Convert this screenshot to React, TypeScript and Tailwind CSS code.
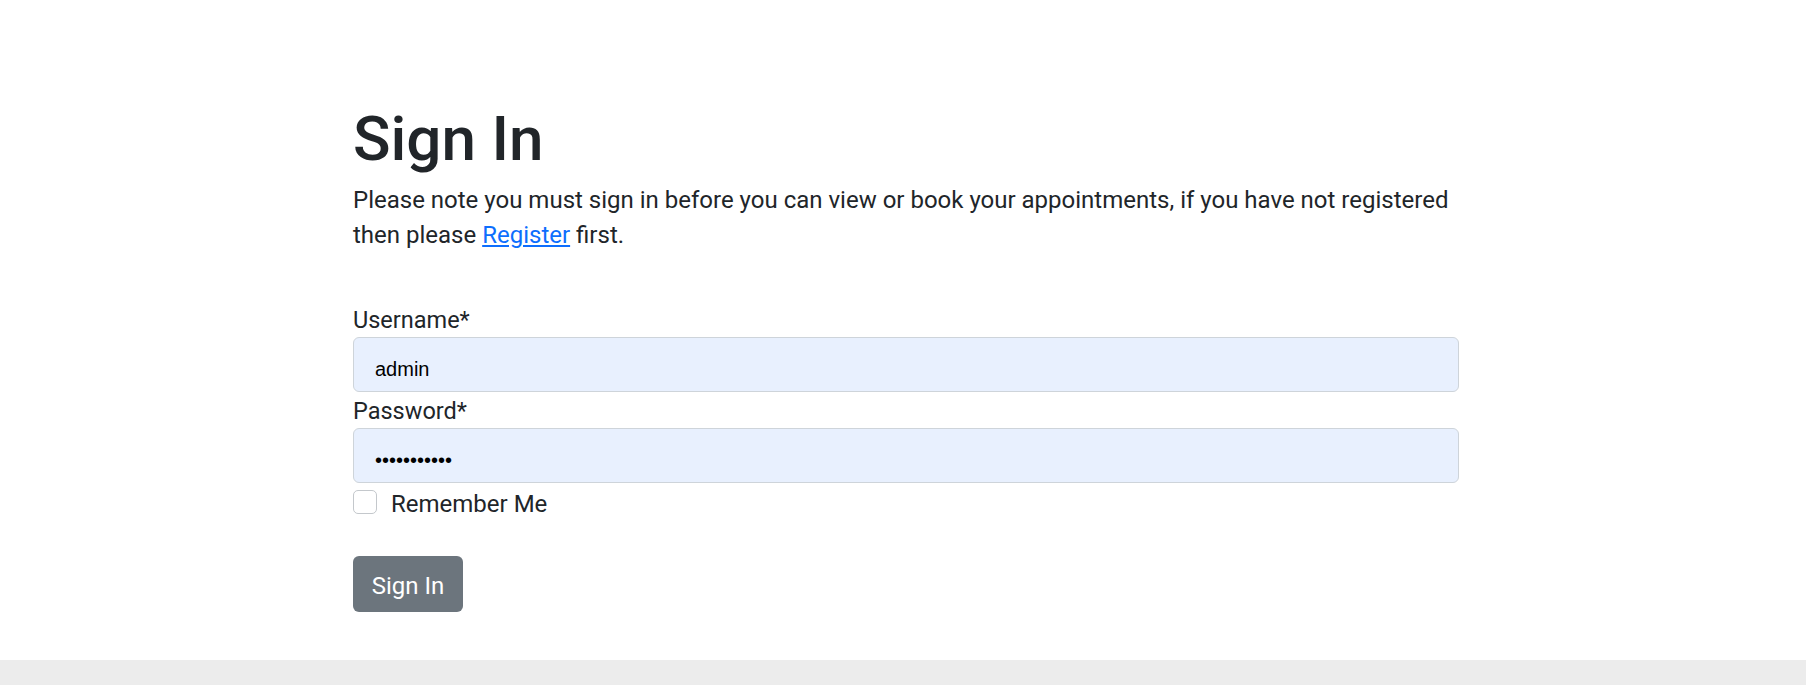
import React from "react";

export default function App() {
  const font = { fontFamily: "Roboto, 'Noto Sans', sans-serif" };
  const mono = { fontFamily: "'Liberation Sans', Arial, sans-serif" };
  return (
    <div className="h-[685px] flex flex-col bg-white text-[#212529]" style={font}>
      <main className="flex-1 pt-[103px]">
        <div className="ml-[353px] w-[1106px]">
          <h1 className="text-[62px] leading-[72px] font-medium">Sign In</h1>
          <p className="mt-[8px] text-[24px] leading-[35px]">
            Please note you must sign in before you can view or book your appointments, if you have not registered then please{" "}
            <a href="#" className="text-[#0d6efd] underline">Register</a> first.
          </p>
          <form className="mt-[52px]" onSubmit={(e) => e.preventDefault()}>
            <label className="block text-[23.5px] leading-[31px]">Username*</label>
            <div className="mt-[1px] h-[55px] rounded-[6px] border border-[#ced4da] bg-[#e8f0fe] flex items-center pl-[21px] pt-[8px]">
              <span className="text-[20px] text-black" style={mono}>admin</span>
            </div>
            <label className="block mt-[3px] text-[23.5px] leading-[33px]">Password*</label>
            <div className="h-[55px] rounded-[6px] border border-[#ced4da] bg-[#e8f0fe] flex items-center pl-[21px] pt-[8px]">
              <span className="text-[20px] text-black" style={mono}>•••••••••••</span>
            </div>
            <div className="mt-[7px] flex items-start h-[29px]">
              <span className="w-[24px] h-[24px] rounded-[5px] border border-[#c4c8cc] bg-white shrink-0" />
              <span className="ml-[14px] text-[24px] leading-[29px]">Remember Me</span>
            </div>
            <button
              type="submit"
              className="mt-[37px] w-[110px] h-[56px] rounded-[6px] bg-[#6c757d] text-white text-[24px] flex items-center justify-center pt-[3px]"
            >
              Sign In
            </button>
          </form>
        </div>
      </main>
      <footer className="h-[25px] bg-[#ececec]" />
    </div>
  );
}
